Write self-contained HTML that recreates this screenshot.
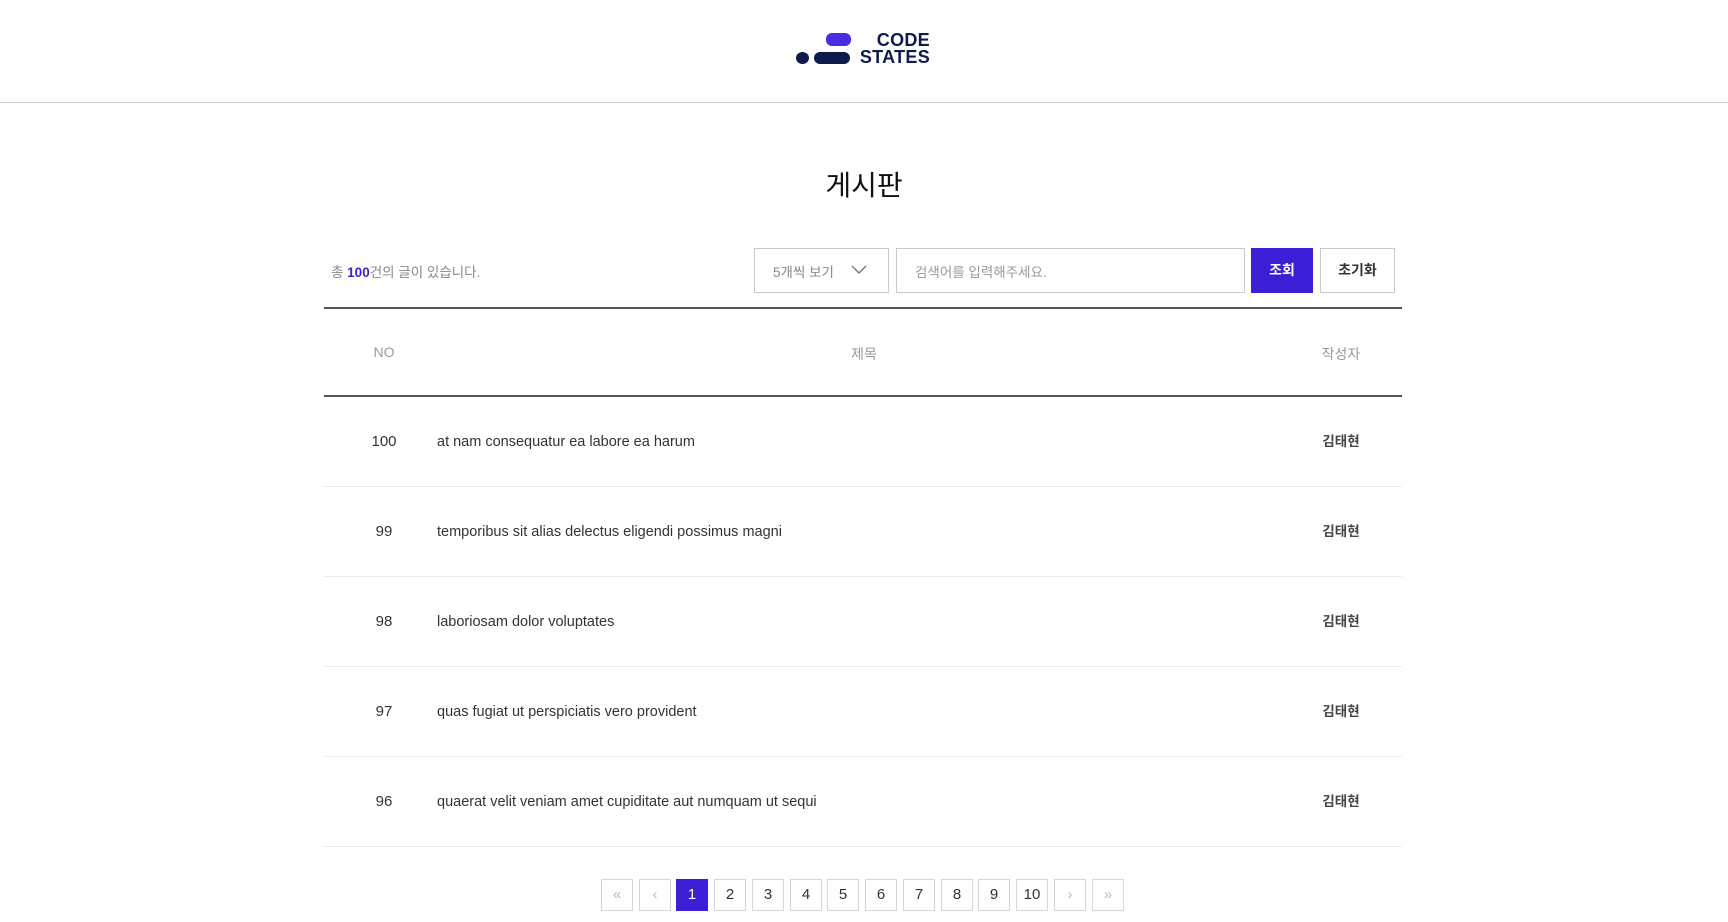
<!DOCTYPE html>
<html><head><meta charset="utf-8"><style>
*{box-sizing:border-box;margin:0;padding:0}
body{width:1728px;height:922px;background:#fff;font-family:"Liberation Sans","Noto Sans CJK KR",sans-serif;color:#222;position:relative;overflow:hidden}
.a{position:absolute}
.hdr{left:0;top:0;width:1728px;height:103px;border-bottom:1px solid #c8c8d0}
.logo-t{font-weight:bold;font-size:18px;line-height:17px;color:#0f1a4d;letter-spacing:0.3px}
.box{border:1px solid #c9c9d4;background:#fff}
.row{left:324px;width:1078px;height:90px;border-bottom:1px solid #ececf2}
.row .n{position:absolute;left:0;width:120px;text-align:center;top:0;line-height:90px;font-size:15px;color:#333}
.row .t{position:absolute;left:113px;top:0;line-height:90px;font-size:14.5px;color:#333}
.row .w{position:absolute;left:980px;width:74px;text-align:center;top:0;line-height:90px;font-size:13.5px;color:#444;font-weight:bold}
.pg{top:879px;width:32px;height:32px;border:1px solid #d4d4dc;text-align:center;line-height:30px;font-size:15px;color:#333;background:#fff}
</style></head><body>
<div class="a hdr"></div>
<div class="a" style="left:826px;top:33px;width:25px;height:13px;border-radius:6px;background:#4a2de0"></div>
<div class="a" style="left:796px;top:52px;width:13px;height:12px;border-radius:50%;background:#0f1a4d"></div>
<div class="a" style="left:814px;top:52px;width:36px;height:12px;border-radius:6px;background:#0f1a4d"></div>
<div class="a logo-t" style="left:858px;top:32px;text-align:right;width:72px">CODE<br>STATES</div>
<div class="a" style="left:0;width:1728px;top:164px;text-align:center;font-size:28px;color:#111">게시판</div>
<div class="a" style="left:331px;top:261px;font-size:13.5px;color:#888">총 <b style="color:#3a22d6">100</b>건의 글이 있습니다.</div>
<div class="a box" style="left:754px;top:248px;width:135px;height:45px"></div>
<div class="a" style="left:773px;top:261px;font-size:13.5px;color:#888">5개씩 보기</div>
<svg class="a" style="left:851px;top:264px" width="16" height="12"><path d="M1 2 L8 9 L15 2" fill="none" stroke="#777" stroke-width="1.4"/></svg>
<div class="a box" style="left:896px;top:248px;width:349px;height:45px"></div>
<div class="a" style="left:915px;top:261px;font-size:13.5px;color:#999">검색어를 입력해주세요.</div>
<div class="a" style="left:1251px;top:248px;width:62px;height:45px;background:#3a1fd6;color:#fff;font-size:14px;font-weight:bold;text-align:center;line-height:45px">조회</div>
<div class="a box" style="left:1320px;top:248px;width:75px;height:45px;text-align:center;line-height:43px;font-size:14px;font-weight:bold;color:#333">초기화</div>
<div class="a" style="left:324px;top:307px;width:1078px;height:2px;background:#555"></div>
<div class="a" style="left:324px;top:344px;width:120px;text-align:center;font-size:14px;color:#999">NO</div>
<div class="a" style="left:824px;top:344px;width:80px;text-align:center;font-size:14px;color:#999">제목</div>
<div class="a" style="left:1304px;top:344px;width:74px;text-align:center;font-size:14px;color:#999">작성자</div>
<div class="a" style="left:324px;top:395px;width:1078px;height:2px;background:#555"></div>
<div class="a row" style="top:397px"><span class="n">100</span><span class="t">at nam consequatur ea labore ea harum</span><span class="w">김태현</span></div>
<div class="a row" style="top:487px"><span class="n">99</span><span class="t">temporibus sit alias delectus eligendi possimus magni</span><span class="w">김태현</span></div>
<div class="a row" style="top:577px"><span class="n">98</span><span class="t">laboriosam dolor voluptates</span><span class="w">김태현</span></div>
<div class="a row" style="top:667px"><span class="n">97</span><span class="t">quas fugiat ut perspiciatis vero provident</span><span class="w">김태현</span></div>
<div class="a row" style="top:757px"><span class="n">96</span><span class="t">quaerat velit veniam amet cupiditate aut numquam ut sequi</span><span class="w">김태현</span></div>
<div class="a pg" style="left:601px;color:#bbb">«</div>
<div class="a pg" style="left:639px;color:#bbb">‹</div>
<div class="a pg" style="left:676px;background:#3a1fd6;color:#fff;border-color:#3a1fd6">1</div>
<div class="a pg" style="left:714px">2</div>
<div class="a pg" style="left:752px">3</div>
<div class="a pg" style="left:790px">4</div>
<div class="a pg" style="left:827px">5</div>
<div class="a pg" style="left:865px">6</div>
<div class="a pg" style="left:903px">7</div>
<div class="a pg" style="left:941px">8</div>
<div class="a pg" style="left:978px">9</div>
<div class="a pg" style="left:1016px">10</div>
<div class="a pg" style="left:1054px;color:#bbb">›</div>
<div class="a pg" style="left:1092px;color:#bbb">»</div>
</body></html>
